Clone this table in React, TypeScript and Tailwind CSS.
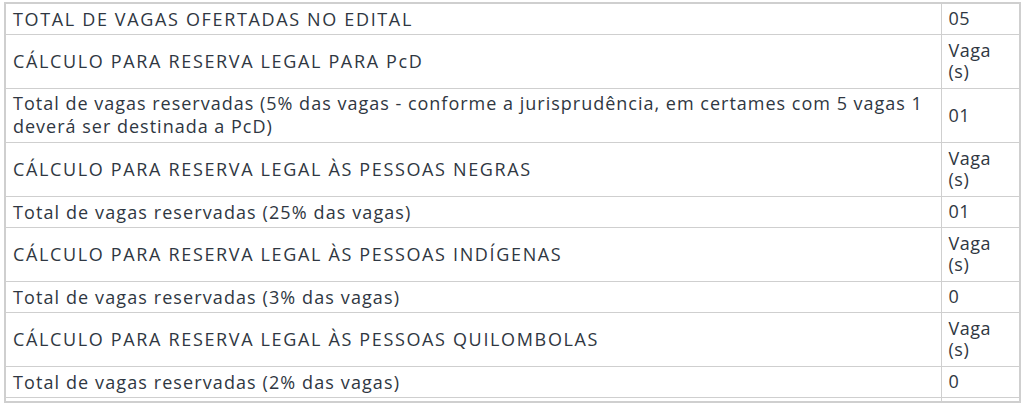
const rows: { label: string; value: string; tall?: boolean; wrap?: boolean; caps?: boolean }[] = [
  { label: "TOTAL DE VAGAS OFERTADAS NO EDITAL", value: "05", caps: true },
  { label: "CÁLCULO PARA RESERVA LEGAL PARA PcD", value: "Vaga (s)", tall: true, caps: true },
  {
    label:
      "Total de vagas reservadas (5% das vagas - conforme a jurisprudência, em certames com 5 vagas 1 deverá ser destinada a PcD)",
    value: "01",
    wrap: true,
  },
  { label: "CÁLCULO PARA RESERVA LEGAL ÀS PESSOAS NEGRAS", value: "Vaga (s)", tall: true, caps: true },
  { label: "Total de vagas reservadas (25% das vagas)", value: "01" },
  { label: "CÁLCULO PARA RESERVA LEGAL ÀS PESSOAS INDÍGENAS", value: "Vaga (s)", tall: true, caps: true },
  { label: "Total de vagas reservadas (3% das vagas)", value: "0" },
  { label: "CÁLCULO PARA RESERVA LEGAL ÀS PESSOAS QUILOMBOLAS", value: "Vaga (s)", tall: true, caps: true },
  { label: "Total de vagas reservadas (2% das vagas)", value: "0" },
];

export default function App() {
  return (
    <div className="bg-white w-[1024px] h-[412px] pl-[4px] pt-[2px] font-['Open_Sans',sans-serif] text-[#2f3742]">
      <table className="w-[1017px] border-collapse border-2 border-[#cfcfcf] text-[18px]">
        <tbody>
          {rows.map((r) => (
            <tr key={r.label} className={r.tall || r.wrap ? "h-[54px]" : "h-[31px]"}>
              <td
                className={`border border-[#cfcfcf] pl-[7px] pr-[4px] align-middle ${
                  r.wrap
                    ? "leading-[23px] tracking-[1px]"
                    : r.caps
                    ? "leading-[22px] tracking-[1.65px]"
                    : "leading-[22px] tracking-[1.1px]"
                }`}
              >
                {r.label}
              </td>
              <td className="w-[79px] border border-[#cfcfcf] px-[7px] align-middle leading-[21px] tracking-[0.5px]">
                {r.tall ? (
                  <>
                    Vaga
                    <br />
                    (s)
                  </>
                ) : (
                  r.value
                )}
              </td>
            </tr>
          ))}
          <tr className="h-[5px]">
            <td className="border border-[#cfcfcf] p-0"></td>
            <td className="border border-[#cfcfcf] p-0"></td>
          </tr>
        </tbody>
      </table>
    </div>
  );
}
